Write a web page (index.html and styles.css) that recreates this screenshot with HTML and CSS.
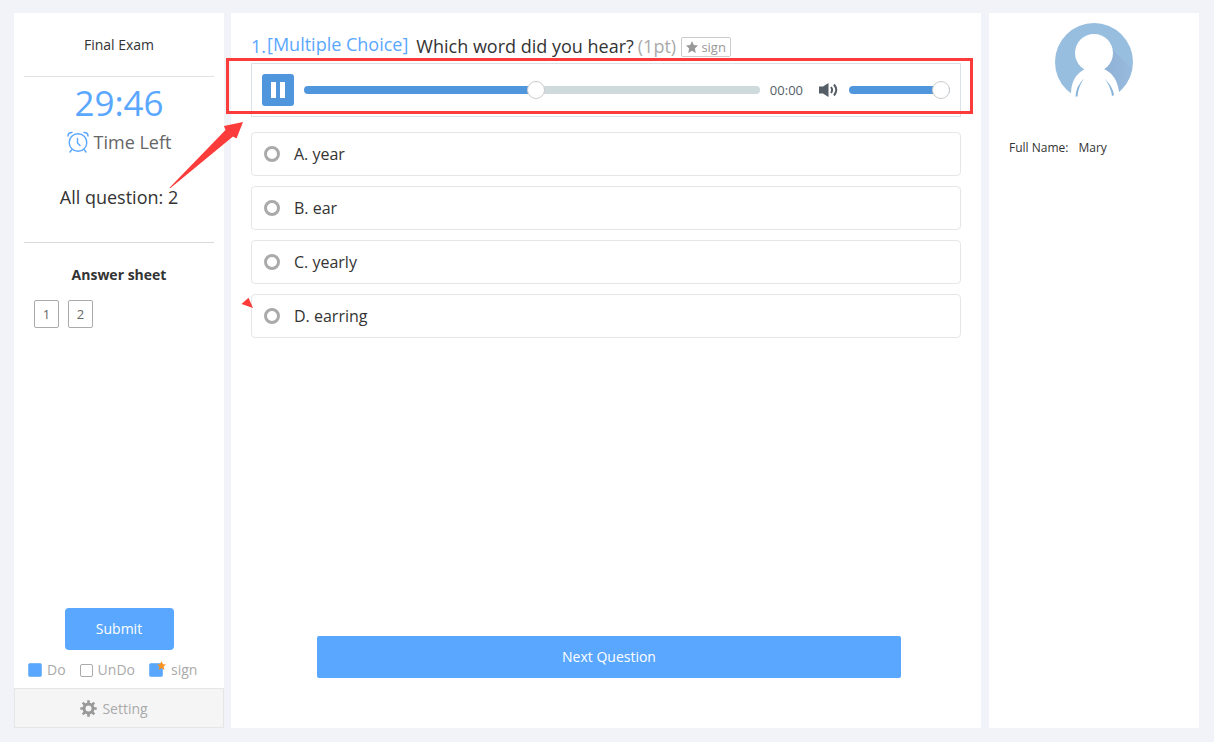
FILE: index.html
```html
<!DOCTYPE html>
<html lang="en">
<head>
  <meta charset="UTF-8">
  <meta name="viewport" content="width=device-width, initial-scale=1.0">
  <title>Final Exam</title>
  <link rel="stylesheet" href="styles.css">
</head>
<body>
  <aside class="sidebar">
    <h1 class="exam-title">Final Exam</h1>

    <div class="timer">
      <div class="time">29:46</div>
      <div class="time-label">
        <svg width="22" height="22" viewBox="0 0 22 22" fill="none" stroke="#5aa7ff" stroke-linecap="round">
          <circle cx="11" cy="11.5" r="8.800" stroke-width="1.400"/>
          <path d="M10.500 7.500v4.500l2.500 2.500" stroke-width="1.400"/>
          <path d="M1 5C1 3 2.500 1.500 5 1.500M21 5C21 3 19.500 1.500 17 1.500" stroke-width="1.500"/>
          <path d="M4.500 19l-1.500 2M17.500 19l1.500 2" stroke-width="1.400"/>
        </svg>
        <span>Time Left</span>
      </div>
      <div class="total">All question: 2</div>
    </div>

    <h2 class="sheet-title">Answer sheet</h2>
    <div class="sheet">
      <button type="button">1</button>
      <button type="button">2</button>
    </div>

    <div class="sidebar-bottom">
      <button type="button" class="submit">Submit</button>
      <div class="legend">
        <span class="legend-item"><i class="box done"></i>Do</span>
        <span class="legend-item undo"><i class="box"></i>UnDo</span>
        <span class="legend-item signed">
          <i class="box done">
            <svg class="badge" width="9" height="9" viewBox="0 0 20 20" fill="#f7931e"><path d="M10 0l3 7 7 .6-5.300 4.700L16.400 20 10 15.800 3.600 20l1.700-7.700L0 7.600 7 7z"/></svg>
          </i>sign
        </span>
      </div>
      <button type="button" class="setting">
        <svg width="17" height="17" viewBox="0 0 17 17">
          <g fill="none" stroke="#999">
            <circle cx="8.500" cy="8.500" r="4.500" stroke-width="3"/>
            <path d="M8.500 .3v3M8.500 13.700v3M.3 8.500h3M13.700 8.500h3M2.700 2.700l2.200 2.200M12.100 12.100l2.200 2.200M14.300 2.700l-2.200 2.200M4.900 12.100l-2.200 2.200" stroke-width="2.600"/>
          </g>
        </svg>
        <span>Setting</span>
      </button>
    </div>
  </aside>

  <main class="content">
    <div class="question">
      <span class="number">1.</span>
      <span class="type">[Multiple Choice]</span>
      <span class="text">Which word did you hear?</span>
      <span class="points">(1pt)</span>
      <button type="button" class="sign">
        <svg width="12" height="12" viewBox="0 0 20 20" fill="#999"><path d="M10 0l3 6.700 7 .8-5.200 4.900L16.300 20 10 16.200 3.700 20l1.500-7.600L0 7.500l7-.8z"/></svg>
        <span>sign</span>
      </button>
    </div>

    <div class="player">
      <button type="button" class="pause" aria-label="Pause">
        <svg width="14" height="16" viewBox="0 0 14 16" fill="#fff"><path d="M0 0h5v16H0zM9 0h5v16H9z"/></svg>
      </button>
      <input type="range" class="progress" aria-label="Position" min="0" max="100" value="51">
      <span class="clock">00:00</span>
      <svg class="speaker" width="20" height="16" viewBox="0 0 20 16">
        <path d="M0 4.500h4L9.500 1v14L4 11.500H0z" fill="#555e66"/>
        <path d="M12 5q2.200 3 0 6M15 2.500q4.500 5.500 0 11" fill="none" stroke="#555e66" stroke-width="2"/>
      </svg>
      <input type="range" class="volume" aria-label="Volume" min="0" max="100" value="100">

      <div class="highlight"></div>
      <svg class="arrow" width="90" height="200" viewBox="0 0 90 200" fill="#fc3b3b">
        <path d="M7.500 75.800L63.500 18l-1.500-4L81 10l-6.500 16.500-3.500-2L8.500 76z"/>
        <path d="M86.500 185.800l4.500 10.200-11.500-4z"/>
      </svg>
    </div>

    <form class="options">
      <label class="option"><input type="radio" name="answer"><span>A. year</span></label>
      <label class="option"><input type="radio" name="answer"><span>B. ear</span></label>
      <label class="option"><input type="radio" name="answer"><span>C. yearly</span></label>
      <label class="option"><input type="radio" name="answer"><span>D. earring</span></label>
    </form>

    <button type="button" class="next">Next Question</button>
  </main>

  <aside class="profile">
    <svg class="avatar" width="78" height="78" viewBox="0 0 78 78">
      <linearGradient id="shade" x1="0" x2="1">
        <stop offset="0" stop-color="#8fb0d5"/>
        <stop offset="1" stop-color="#97badd"/>
      </linearGradient>
      <circle cx="39" cy="39" r="39" fill="#98bedf"/>
      <path d="M56 25l21 21q-3 14-13 23L46 46z" fill="url(#shade)"/>
      <circle cx="39" cy="30" r="19" fill="#fff"/>
      <path d="M32 44L30 46Q16 53 16 71V78H64V69Q62 52 49 46L47 44z" fill="#fff"/>
      <path d="M29 55.500Q21 63 20.500 73.500h2Q23 64 29 55.500zM49.500 55.500Q58 64 59 72l-2 1Q56 64 49.500 55.500z" fill="#85b2d9"/>
    </svg>
    <div class="name"><span>Full Name:</span><span>Mary</span></div>
  </aside>
</body>
</html>
```

FILE: styles.css
```css
* {
  box-sizing: border-box;
}

body {
  display: flex;
  min-height: 100vh;
  margin: 0;
  padding: 13px 15px 14px 14px;
  background-color: #f2f3f8;
  color: #333;
  font-family: "Open Sans", "Noto Sans", sans-serif;
  font-size: 14px;
}

button {
  padding: 0;
  font-family: inherit;
  cursor: pointer;
}

svg {
  flex: none;
}

/* left column */
.sidebar {
  display: flex;
  flex-direction: column;
  width: 210px;
  margin-right: 7px;
  background-color: #fff;
  text-align: center;
}

.exam-title {
  margin: 0 10px;
  border-bottom: 1px solid #e2e2e2;
  font-size: 14px;
  font-weight: normal;
  line-height: 63px;
}

.timer {
  height: 166px;
  margin: 0 10px;
  border-bottom: 1px solid #d9d9d9;
}

.time {
  color: #5aa7ff;
  font-size: 35px;
  line-height: 52px;
}

.time-label {
  display: flex;
  justify-content: center;
  align-items: center;
  gap: 5px;
  color: #666;
  font-size: 18px;
  line-height: 26px;
}

.total {
  margin-top: 28px;
  font-size: 18px;
  line-height: 28px;
}

.sheet-title {
  margin: 22px 0 15px;
  font-size: 14px;
  line-height: 20px;
}

.sheet {
  display: flex;
  gap: 9px;
  padding: 0 20px;
}

.sheet button {
  width: 25px;
  height: 28px;
  border: 1px solid #aaa;
  border-radius: 2px;
  background-color: #fff;
  color: #666;
  font-size: 13px;
}

.sidebar-bottom {
  margin-top: auto;
}

.submit {
  width: 109px;
  height: 42px;
  padding-bottom: 2px;
  border: none;
  border-radius: 4px;
  background-color: #5aa7ff;
  color: #fff;
  font-size: 14px;
}

.legend {
  display: flex;
  gap: 14px;
  padding: 10px 14px 8px;
  color: #aaa;
  font-size: 14px;
  line-height: 20px;
}

.legend-item {
  display: flex;
  align-items: center;
  gap: 5px;
}

.signed {
  gap: 8px;
}

.box {
  position: relative;
  width: 13px;
  height: 13px;
  border: 1px solid #aaa;
  border-radius: 2px;
}

.box.done {
  width: 14px;
  height: 14px;
  border-color: #7db8f7;
  background-color: #5aa7ff;
}

.badge {
  position: absolute;
  top: -3px;
  right: -4px;
}

.setting {
  display: flex;
  justify-content: center;
  align-items: center;
  gap: 5px;
  width: 100%;
  height: 40px;
  padding-right: 10px;
  border: 1px solid #e6e6e6;
  background-color: #f5f5f5;
  color: #aaa;
  font-size: 14px;
}

/* question */
.content {
  display: flex;
  flex: 1;
  flex-direction: column;
  padding: 20px 20px 50px;
  background-color: #fff;
}

.question {
  display: flex;
  align-items: center;
  height: 26px;
  margin-bottom: 4px;
  font-size: 18px;
  line-height: 24px;
}

.number,
.type {
  color: #5aa7ff;
}

.type {
  margin: 0 8px 4px 1px;
}

.points {
  margin: 0 5px 0 4px;
  color: #aaa;
}

.sign {
  display: flex;
  justify-content: center;
  align-items: center;
  gap: 3px;
  width: 50px;
  height: 20px;
  margin-top: 2px;
  border: 1px solid #ccc;
  border-radius: 2px;
  background-color: #fff;
  color: #999;
  font-size: 13px;
  line-height: 18px;
}

.player {
  position: relative;
  display: flex;
  align-items: center;
  gap: 10px;
  padding: 10px;
  border: 1px solid #dae1e8;
}

.pause {
  display: flex;
  justify-content: center;
  align-items: center;
  width: 32px;
  height: 32px;
  border: none;
  border-radius: 3px;
  background-color: #5096dc;
}

input[type="range"] {
  height: 8px;
  margin: 0;
  border-radius: 4px;
  background-color: #5096dc;
  appearance: none;
}

input[type="range"]::-webkit-slider-thumb {
  width: 18px;
  height: 18px;
  border: 1px solid #ccc;
  border-radius: 50%;
  background-color: #fff;
  appearance: none;
}

.progress {
  flex: 1;
  min-width: 0;
}

input.progress {
  background: linear-gradient(to right, #5096dc 51%, #cfdadd 51%);
}

.clock {
  color: #555e66;
  font-size: 13px;
}

.speaker {
  margin-left: 6px;
}

.volume {
  width: 101px;
}

.highlight {
  position: absolute;
  top: -6px;
  right: -13px;
  bottom: 2px;
  left: -26px;
  border: 3px solid #fc3b3b;
  pointer-events: none;
}

.arrow {
  position: absolute;
  top: 48px;
  left: -90px;
  overflow: visible;
  pointer-events: none;
}

.options {
  display: flex;
  flex-direction: column;
  gap: 10px;
  margin-top: 15px;
}

.option {
  display: flex;
  align-items: center;
  gap: 14px;
  height: 44px;
  padding: 0 12px;
  border: 1px solid #e6e6e6;
  border-radius: 4px;
  font-size: 16px;
}

.option input {
  width: 16px;
  height: 16px;
  margin: 0;
  border: 3px solid #aaa;
  border-radius: 50%;
  appearance: none;
}

.option input:checked {
  border-color: #5aa7ff;
}

.next {
  height: 42px;
  margin: auto 60px 0 66px;
  padding-bottom: 2px;
  border: none;
  border-radius: 2px;
  background-color: #5aa7ff;
  color: #fff;
  font-size: 14px;
}

/* right column */
.profile {
  width: 210px;
  margin-left: 8px;
  padding: 10px 20px;
  background-color: #fff;
}

.avatar {
  display: block;
  margin: 0 auto;
}

.name {
  display: flex;
  gap: 10px;
  margin-top: 37px;
  font-size: 12px;
  line-height: 20px;
}
```
